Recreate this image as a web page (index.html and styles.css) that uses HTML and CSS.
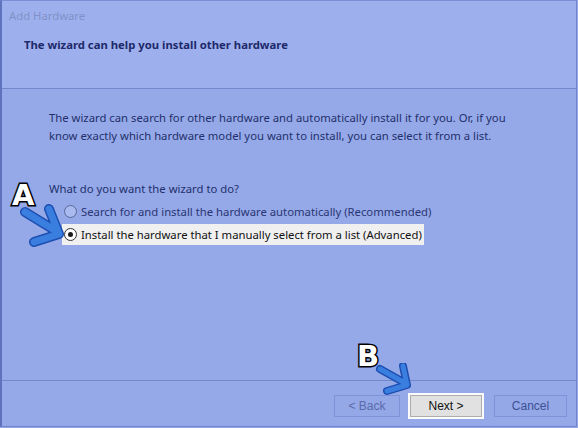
FILE: index.html
```html
<!DOCTYPE html>
<html lang="en">
<head>
    <meta charset="UTF-8">
    <meta name="viewport" content="width=device-width, initial-scale=1.0">
    <title>Add Hardware</title>
    <link rel="stylesheet" href="styles.css">
</head>
<body>
    <div class="window">
        <header class="header">
            <div class="caption">Add Hardware</div>
            <h1 class="heading">The wizard can help you install other hardware</h1>
        </header>

        <main class="content">
            <p class="intro">The wizard can search for other hardware and automatically install it for you. Or, if you know exactly which hardware model you want to install, you can select it from a list.</p>
            <p class="question">What do you want the wizard to do?</p>
            <div class="options">
                <label class="option"><span class="radio"></span>Search for and install the hardware automatically (Recommended)</label>
                <label class="option selected"><span class="radio checked"></span>Install the hardware that I manually select from a list (Advanced)</label>
            </div>
        </main>

        <footer class="footer">
            <button class="btn back disabled">&lt; Back</button>
            <button class="btn primary">Next &gt;</button>
            <button class="btn cancel">Cancel</button>
        </footer>

        <!-- annotations drawn over the dialog -->
        <span class="mark mark-a">A</span>
        <svg class="arrow arrow-a" width="50" height="45" viewBox="0 0 50 45">
            <path d="M5 8 L36 27 M29 5 L39 30 L14 38" fill="none" stroke="#1d4fb0" stroke-width="10" stroke-linecap="round" stroke-linejoin="round"/>
            <path d="M5 8 L36 27 M29 5 L39 30 L14 38" fill="none" stroke="#3a7fe0" stroke-width="7" stroke-linecap="round" stroke-linejoin="round"/>
        </svg>
        <span class="mark mark-b">B</span>
        <svg class="arrow arrow-b" width="42" height="36" viewBox="0 0 42 36">
            <path d="M5 6 L30 20 M28 3 L32 22 L12 28" fill="none" stroke="#1d4fb0" stroke-width="8" stroke-linecap="round" stroke-linejoin="round"/>
            <path d="M5 6 L30 20 M28 3 L32 22 L12 28" fill="none" stroke="#3a7fe0" stroke-width="5" stroke-linecap="round" stroke-linejoin="round"/>
        </svg>
    </div>
</body>
</html>
```

FILE: styles.css
```css
body { margin: 0; background: #95a9e9; font-family: "Noto Sans", "Open Sans", sans-serif; font-size: 11.3px; color: #23306b; }
.window { position: relative; width: 577px; height: 427px; border-left: 2px solid #5f72bd; border-right: 1px solid #7085cf; border-top: 1px solid #7c8fd4; border-bottom: 1px solid #7085cf; display: flex; flex-direction: column; box-sizing: border-box; }
.header { height: 88px; background: #9db0ed; border-bottom: 1px solid #7487cd; box-sizing: border-box; }
.caption { padding: 7px 0 0 7px; color: #8091c8; }
.heading { margin: 14px 0 0 22px; font-size: 11.3px; font-weight: bold; color: #1d296a; }
.content { flex: 1; padding: 20px 0 0 47px; }
.intro { margin: 0; width: 475px; line-height: 18px; }
.question { margin: 36px 0 0; }
.options { margin: 5px 0 0 13px; display: flex; flex-direction: column; align-items: flex-start; gap: 2px; }
.option { display: flex; align-items: center; gap: 4px; height: 21px; padding: 0 2px; color: #2a3672; }
.option.selected { background: #f0f0f0; color: #111; }
.radio { width: 11px; height: 11px; border: 1px solid #5b6796; border-radius: 50%; background: #a9baf0; position: relative; }
.radio.checked { border-color: #333; background: #fff; }
.radio.checked::after { content: ""; position: absolute; left: 3px; top: 3px; width: 5px; height: 5px; border-radius: 50%; background: #1a1a1a; }
.footer { height: 46px; border-top: 1px solid #7487cd; display: flex; justify-content: flex-end; align-items: flex-start; padding: 14px 9px 0 0; box-sizing: border-box; }
.btn { height: 22px; font-family: "Liberation Sans", Arial, sans-serif; font-size: 12px; background: #94a8e8; border: 1px solid #7f93d8; color: #3e4f94; padding: 0; }
.btn.back { width: 66px; margin-right: 10px; }
.btn.disabled { color: #5a6aa8; }
.btn.primary { width: 72px; margin-right: 12px; background: #e1e1e1; border: 1px solid #adadad; outline: 2px solid #fbfbfb; color: #111; }
.btn.cancel { width: 73px; }
.mark { position: absolute; font-family: "DejaVu Sans", sans-serif; font-weight: bold; font-size: 29px; color: #fff; -webkit-text-stroke: 3px #000; paint-order: stroke fill; line-height: 1; }
.mark-a { left: 10px; top: 180px; }
.mark-b { left: 355px; top: 341px; }
.arrow { position: absolute; }
.arrow-a { left: 18px; top: 203px; }
.arrow-b { left: 373px; top: 362px; }
```
